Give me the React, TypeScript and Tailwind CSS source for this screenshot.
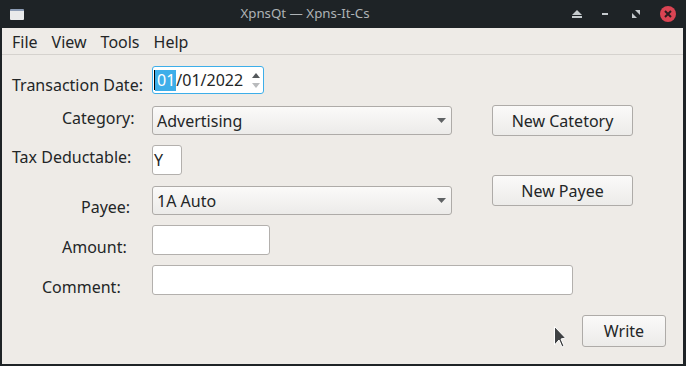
import React from "react";

const labelCls = "text-[16px] leading-[22px] text-[#232627] whitespace-nowrap";
const boxCls = "border border-[#b3b0ad] rounded-[3px] bg-white";
const gradCls = "border border-[#aeaba8] rounded-[3px] bg-linear-to-b from-[#fbfaf9] to-[#ecebe9]";

const Arrow = () => (
  <svg width="9" height="5" viewBox="0 0 9 5" className="mr-[5px]">
    <polygon points="0,0 9,0 4.5,5" fill="#5f6264" />
  </svg>
);

const Row = ({
  h,
  label,
  labelLeft,
  labelTop,
  fieldTop,
  children,
}: {
  h: number;
  label: string;
  labelLeft: number;
  labelTop: number;
  fieldTop: number;
  children: React.ReactNode;
}) => (
  <div className="flex items-start" style={{ height: h }}>
    <div className="w-[150px] shrink-0" style={{ paddingLeft: labelLeft, paddingTop: labelTop }}>
      <span className={labelCls}>{label}</span>
    </div>
    <div style={{ paddingTop: fieldTop }}>{children}</div>
  </div>
);

const Button = ({ text, w }: { text: string; w: string }) => (
  <button className={`${gradCls} ${w} h-[31px] text-[16px] leading-[22px] text-[#232627] flex items-center justify-center`}>
    {text}
  </button>
);

export default function App() {
  return (
    <div className="w-[686px] h-[366px] bg-[#1e2326] flex flex-col font-['Noto_Sans',sans-serif] relative overflow-hidden">
      {/* title bar */}
      <div className="h-[28px] flex items-center shrink-0">
        <div className="ml-[10px] w-[14px] h-[11px] bg-[#e9eaeb] border-t-[2px] border-[#8c9cb5] rounded-[1px]" />
        <div className="flex-1 text-center text-[13.3px] text-[#aeb3b6] pl-[14px]">XpnsQt — Xpns-It-Cs</div>
        <div className="flex items-center mr-[10px]">
          <svg width="10" height="8" viewBox="0 0 10 8" className="mr-[20px]">
            <polygon points="5,0 10,5 0,5" fill="#c5cacd" />
            <rect x="0" y="6" width="10" height="2" fill="#c5cacd" />
          </svg>
          <div className="w-[6px] h-[2px] bg-[#c5cacd] mr-[24px]" />
          <svg width="8" height="8" viewBox="0 0 8 8" className="mr-[20px]">
            <polygon points="3,0 8,0 8,5" fill="#c5cacd" />
            <polygon points="0,3 0,8 5,8" fill="#c5cacd" />
          </svg>
          <div className="w-[16px] h-[16px] rounded-full bg-[#da4453] flex items-center justify-center">
            <svg width="8" height="8" viewBox="0 0 8 8">
              <path d="M1 1 L7 7 M7 1 L1 7" stroke="#2a1d20" strokeWidth="2" />
            </svg>
          </div>
        </div>
      </div>

      {/* client area */}
      <div className="flex-1 ml-[2px] mr-[3px] mb-[2px] bg-[#eeebe7] flex flex-col">
        {/* menu */}
        <div className="h-[27px] shrink-0 border-b border-[#d5d2ce] flex items-start pt-[3px] pl-[10px] gap-[14px] text-[16px] leading-[22px] text-[#232627]">
          <span>File</span>
          <span>View</span>
          <span>Tools</span>
          <span>Help</span>
        </div>

        <div className="flex mt-[11px]">
          <div className="w-[490px] flex flex-col">
            <Row h={39} label="Transaction Date:" labelLeft={10} labelTop={7} fieldTop={0}>
              <div className="w-[112px] h-[28px] border border-[#3daee9] rounded-[3px] bg-white flex items-center pl-[1px] text-[16px] leading-[22px] text-[#232627]">
                <div className="w-[1px] h-[20px] bg-black" />
                <span className="bg-[#3daee9] text-white pl-[2px] pr-[1px] leading-[21px]">01</span>
                <span>/01/2022</span>
                <div className="ml-auto mr-[3px] flex flex-col gap-[5px]">
                  <svg width="8" height="5" viewBox="0 0 8 5">
                    <polygon points="4,0 8,5 0,5" fill="#55595c" />
                  </svg>
                  <svg width="8" height="5" viewBox="0 0 8 5">
                    <polygon points="0,0 8,0 4,5" fill="#b9bbbd" />
                  </svg>
                </div>
              </div>
            </Row>
            <Row h={38} label="Category:" labelLeft={60} labelTop={1} fieldTop={1}>
              <div className={`${gradCls} w-[300px] h-[29px] flex items-center justify-between pl-[4px] text-[16px] leading-[22px] text-[#232627]`}>
                <span>Advertising</span>
                <Arrow />
              </div>
            </Row>
            <Row h={43} label="Tax Deductable:" labelLeft={10} labelTop={2} fieldTop={2}>
              <div className={`${boxCls} w-[30px] h-[30px] flex items-center pl-[1px] text-[16px] leading-[22px] text-[#232627]`}>
                Y
              </div>
            </Row>
            <Row h={39} label="Payee:" labelLeft={79} labelTop={9} fieldTop={0}>
              <div className={`${gradCls} w-[300px] h-[29px] flex items-center justify-between pl-[4px] text-[16px] leading-[22px] text-[#232627]`}>
                <span>1A Auto</span>
                <Arrow />
              </div>
            </Row>
            <Row h={40} label="Amount:" labelLeft={60} labelTop={10} fieldTop={0}>
              <div className={`${boxCls} w-[118px] h-[30px]`} />
            </Row>
            <Row h={30} label="Comment:" labelLeft={40} labelTop={10} fieldTop={0}>
              <div className={`${boxCls} w-[421px] h-[30px]`} />
            </Row>
          </div>
          <div className="flex flex-col pt-[39px] gap-[39px]">
            <Button text="New Catetory" w="w-[141px]" />
            <Button text="New Payee" w="w-[141px]" />
          </div>
        </div>

        <div className="flex justify-end pr-[17px] mt-[20px]">
          <button className={`${gradCls} w-[84px] h-[32px] text-[16px] leading-[22px] text-[#232627] flex items-center justify-center`}>
            Write
          </button>
        </div>
      </div>

      {/* mouse pointer */}
      <svg width="14" height="24" viewBox="0 0 14 24" className="absolute left-[553px] top-[325px]">
        <polygon points="1.5,1.5 12.5,13 8,14 11,21 9,22 6,15 1.5,20" fill="#3f4143" stroke="#ffffff" strokeWidth="1" />
      </svg>
    </div>
  );
}
